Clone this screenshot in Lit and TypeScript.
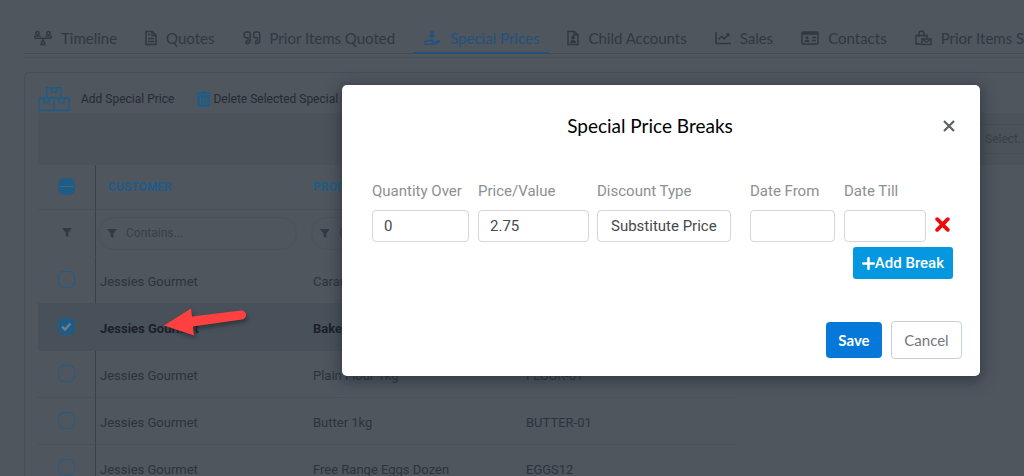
import { LitElement, html, css, svg, nothing } from "lit";
import { customElement, state } from "lit/decorators.js";

const icons = {
  timeline: svg`<svg width="18" height="16" viewBox="0 0 18 16" fill="none" stroke="currentColor" stroke-width="1.5"><circle cx="3.5" cy="3.2" r="1.7"/><circle cx="14.5" cy="3.2" r="1.7"/><path d="M.8 8V6.800c0-1.500 5.400-1.500 5.400 0M11.800 6.800c0-1.500 5.400-1.500 5.400 0V8M.8 8.200h16.400M9 8v3"/><path d="M7 14.400 8.200 11h1.600l1.200 3.400z"/></svg>`,
  quotes: svg`<svg width="12" height="16" viewBox="0 0 12 16" fill="none" stroke="currentColor" stroke-width="1.5"><path d="M1 1.500h6.500L11 5v9.500H1z"/><path d="M7 1.500V5.500h4M3 4.500h2M3 8.500h6M3 11.500h6"/></svg>`,
  prior: svg`<svg width="18" height="16" viewBox="0 0 18 16" fill="none" stroke="currentColor" stroke-width="1.5"><path d="M5 7.800H3.200A2 2 0 0 1 1.200 5.800V4a2 2 0 0 1 2-2h2a2 2 0 0 1 2 2v6.500a3 3 0 0 1-3 3H3.200v-2.200H4a1 1 0 0 0 1-1z"/><path d="M14.500 7.800h-1.800a2 2 0 0 1-2-2V4a2 2 0 0 1 2-2h2a2 2 0 0 1 2 2v6.500a3 3 0 0 1-3 3h-1v-2.200h.8a1 1 0 0 0 1-1z"/></svg>`,
  special: svg`<svg width="18" height="16" viewBox="0 0 18 16" fill="none" stroke="currentColor" stroke-width="1.5"><circle cx="9" cy="2.500" r="1.200"/><path d="M9 4v5.500M6.200 6.200l2.800-.7 2.800.7"/><path d="M1 14.300h11c2 0 3-1.500 4.500-3.300-1.200-1-2.500.5-4 1.200H8.500c2 0 2-1.800 0-1.800H4.500L3 11.600H1"/></svg>`,
  child: svg`<svg width="12" height="16" viewBox="0 0 12 16" fill="none" stroke="currentColor" stroke-width="1.5"><path d="M1 1.500h6.500L11 5v9.500H1z"/><path d="M7 1.500V5h4"/><circle cx="6" cy="7.600" r="1.200" fill="currentColor"/><path d="M3.500 12.500c0-3 5-3 5 0z" fill="currentColor" stroke-width="1"/></svg>`,
  sales: svg`<svg width="16" height="16" viewBox="0 0 16 16" fill="none" stroke="currentColor" stroke-width="1.6"><path d="M1 2v11.500h15"/><path d="m3.500 9.500 3.200-3.200 2.600 2.600 4.200-4.400"/><path d="M10.500 3.200h4v4z" fill="currentColor" stroke="none"/></svg>`,
  contacts: svg`<svg width="18" height="16" viewBox="0 0 18 16" fill="none" stroke="currentColor" stroke-width="1.5"><rect x="1" y="2" width="16" height="12" rx="1"/><path d="M1 3.500h16" stroke-width="2.5"/><circle cx="6" cy="7.700" r="1.500" fill="currentColor" stroke="none"/><path d="M3.500 12c0-3 5-3 5 0z" fill="currentColor" stroke="none"/><path d="M11 7.500h4M11 10.500h4"/></svg>`,
  sold: svg`<svg width="17" height="16" viewBox="0 0 17 16" fill="none" stroke="currentColor" stroke-width="1.4"><path d="M6 14H1V5.500h11V8M4 7V3.500a2.500 2.500 0 0 1 5 0V7"/><rect x="7" y="9" width="9" height="5.500"/><path d="M7 9l4.500 3.200L16 9"/></svg>`,
};

const boxes = svg`<svg width="32" height="26" viewBox="0 0 32 26" fill="none" stroke="currentColor" stroke-width="1.4"><path d="M8.700 12V1.700h14.600V12M1 12h30v12.500H1zM16 12v12.500"/><path d="M13.500 2v4h5V2M6 12v4.500h5V12M21 12v4.500h5V12"/></svg>`;
const trash = svg`<svg width="15" height="18" viewBox="0 0 16 18"><path fill="currentColor" fill-rule="evenodd" d="M0 2h4.500L6 .5h4L11.500 2H16v2H0zM1.500 5h13v11a1.500 1.500 0 0 1-1.500 1.500H3A1.500 1.500 0 0 1 1.500 16zM4.200 7v8.500h1.400V7zM7.300 7v8.500h1.400V7zM10.400 7v8.500h1.400V7z"/></svg>`;
const funnel = svg`<svg width="10" height="9" viewBox="0 0 10 9"><path fill="currentColor" d="M0 0h10L6.300 4.500V9L3.700 7.500v-3z"/></svg>`;

interface Row { customer: string; product: string; code: string; checked: boolean }

@customElement("app-root")
export class AppRoot extends LitElement {
  @state() private rows: Row[] = [
    { customer: "Jessies Gourmet", product: "Caramel Slice", code: "CARAMEL-01", checked: false },
    { customer: "Jessies Gourmet", product: "Baked Cheesecake", code: "CHEESE-01", checked: true },
    { customer: "Jessies Gourmet", product: "Plain Flour 1kg", code: "FLOUR-01", checked: false },
    { customer: "Jessies Gourmet", product: "Butter 1kg", code: "BUTTER-01", checked: false },
    { customer: "Jessies Gourmet", product: "Free Range Eggs Dozen", code: "EGGS12", checked: false },
  ];

  private tabs: [keyof typeof icons, string][] = [
    ["timeline", "Timeline"], ["quotes", "Quotes"], ["prior", "Prior Items Quoted"],
    ["special", "Special Prices"], ["child", "Child Accounts"], ["sales", "Sales"],
    ["contacts", "Contacts"], ["sold", "Prior Items Sold"],
  ];

  static styles = css`
    :host { display: block; height: 100vh; overflow: hidden; position: relative; background: #4f565e; color: #2d333b; font-family: Roboto, "Liberation Sans", sans-serif; font-size: 12px; }
    * { box-sizing: border-box; }
    svg { display: block; flex: none; }
    button, input, select { font: inherit; color: inherit; margin: 0; }
    .page { padding: 24px 0 0 24px; height: 100%; display: flex; flex-direction: column; overflow: hidden; }
    .tabs { display: flex; gap: 8px; flex: none; height: 30px; border-bottom: 1px solid #444b53; white-space: nowrap; font: 15px/28px Lato, sans-serif; }
    .tab { display: flex; align-items: center; gap: 9px; padding: 0 10px; height: 30px; color: #323840; text-decoration: none; border-bottom: 2px solid transparent; }
    .tab.active { color: #22527d; border-color: #22527d; }
    .rule { flex: none; height: 4px; border-bottom: 1px solid #495058; }
    .panel { flex: 1; margin-top: 14px; padding: 12px 0 0 13px; border: 1px solid #474e57; border-right: 0; border-bottom: 0; border-radius: 6px 0 0 0; }
    .tools { display: flex; align-items: center; height: 28px; gap: 22px; }
    .tool { display: flex; align-items: center; padding: 0; border: 0; background: none; white-space: nowrap; color: #262b33; }
    .add { gap: 11px; }
    .del { gap: 2px; }
    .blue { color: #1d5c87; }
    .band { display: flex; justify-content: flex-end; align-items: center; height: 52px; background: #4b5259; }
    .pick { display: flex; width: 54px; height: 30px; align-items: center; padding-left: 15px; color: #3a4048; border-top: 1px solid #474d55; border-bottom: 1px solid #474d55; }
    table { width: 699px; border-collapse: separate; border-spacing: 0; table-layout: fixed; text-align: left; font-size: 13px; }
    .c0 { width: 58px; }
    .c1 { width: 213px; }
    th, td { padding: 0 4px; height: 47px; border-bottom: 1px solid #495058; font-weight: 400; white-space: nowrap; }
    td { padding-top: 2px; }
    th:first-child, td:first-child { border-right: 1px solid #3a4149; padding: 0 0 1px; }
    .head th { height: 45px; color: #1f5c87; font-size: 12px; font-weight: 700; }
    .head th:nth-child(2) { padding-left: 12px; }
    .filters th { border-bottom-color: transparent; }
    .mid { display: flex; justify-content: center; }
    .filters { color: #333942; }
    .pill { display: flex; align-items: center; gap: 9px; height: 33px; margin: 0 8px 0 -2px; padding-left: 8px; border: 1px solid #4b5259; border-radius: 16px; }
    .pill input { width: 120px; padding: 0; border: 0; outline: 0; background: none; font-size: 12px; }
    .pill input::placeholder { color: #3a4048; opacity: 1; }
    .selected td { background: #48515a; font-weight: 700; color: #1b2028; }
    .selected td:first-child { border-right-color: #48515a; }
    .box { appearance: none; width: 17px; height: 17px; border: 1px solid #1f5c87; border-radius: 6px; }
    .box:checked { background: #1d5c87 url("data:image/svg+xml,%3Csvg xmlns='http://www.w3.org/2000/svg' viewBox='0 0 17 17'%3E%3Cpath d='M4 8.5l3 3 5.500-6' fill='none' stroke='%23727d86' stroke-width='2.400'/%3E%3C/svg%3E") center / 17px; }
    .box:indeterminate { background: #1d5c87 linear-gradient(#4c6577, #4c6577) center / 13px 1px no-repeat; }
    .arrow { position: absolute; left: 160px; top: 304px; filter: drop-shadow(2px 3px 2px #20252c99); }
    .dialog { position: absolute; left: 342px; top: 85px; width: calc(100% - 386px); padding: 29px 18px 17px 30px; border-radius: 5px; background: #fff; box-shadow: 0 3px 14px 2px #23283499; color: #4c4f54; font-size: 15px; }
    .title { display: flex; align-items: center; gap: 15px; margin-right: 7px; }
    h2 { flex: 1; margin: 0; font: 400 19px/24px Lato, sans-serif; color: #000; text-align: center; }
    .close { padding: 0; border: 0; background: none; color: #5b6168; }
    .fields { display: flex; align-items: flex-end; margin-top: 43px; }
    .field { display: flex; flex-direction: column; gap: 8px; color: #8d8f92; line-height: 21px; white-space: nowrap; }
    .field input, .field select { appearance: none; width: 100%; height: 32px; padding: 0 11px; border: 1px solid #d3d5d8; border-radius: 4px; background: #fff; color: #45484d; outline: 0; }
    .field select { padding: 0 13px; }
    .qty { width: 97px; margin-right: 9px; }
    .price { width: 111px; margin-right: 8px; }
    .type { width: 134px; margin-right: 19px; }
    .from { width: 85px; margin-right: 9px; }
    .till { width: 82px; margin-right: 9px; }
    .remove { padding: 0 0 10px; border: 0; background: none; color: #f00b0b; }
    .break { display: flex; align-items: center; height: 32px; margin: 5px 9px 0 auto; padding: 0 9px; border: 0; border-radius: 3px; background: #0598e0; color: #fff; font-weight: 500; }
    .actions { display: flex; align-items: center; justify-content: flex-end; gap: 9px; margin-top: 42px; font: 15px/20px Lato, sans-serif; }
    .save { height: 36px; width: 56px; padding: 0; border: 0; border-radius: 4px; background: #0578d9; color: #fff; font-weight: 700; }
    .cancel { height: 38px; width: 71px; padding: 0; border: 1px solid #c6ced6; border-radius: 4px; background: #fff; color: #75787c; }
  `;

  private toggle(i: number) {
    this.rows = this.rows.map((r, n) => (n === i ? { ...r, checked: !r.checked } : r));
  }

  render() {
    return html`
      <div class="page">
        <nav class="tabs">
          ${this.tabs.map(([icon, label]) => html`<a href="#" class="tab ${icon === "special" ? "active" : ""}" aria-current=${icon === "special" ? "page" : nothing}>${icons[icon]}<span>${label}</span></a>`)}
        </nav>
        <div class="rule"></div>
        <main class="panel">
          <div class="tools">
            <button class="tool add"><span class="blue">${boxes}</span>Add Special Price</button>
            <button class="tool del"><span class="blue">${trash}</span>Delete Selected Special Prices</button>
          </div>
          <div class="band"><span class="pick">Select...</span></div>
          <table>
            <colgroup><col class="c0" /><col class="c1" /><col class="c1" /><col /></colgroup>
            <thead>
              <tr class="head">
                <th><div class="mid"><input class="box" type="checkbox" aria-label="Select all" .indeterminate=${true} /></div></th>
                <th>CUSTOMER</th><th>PRODUCT</th><th>CODE</th>
              </tr>
              <tr class="filters">
                <th><div class="mid">${funnel}</div></th>
                ${["customer", "product", "code"].map((c) => html`<th><label class="pill">${funnel}<input aria-label="Filter ${c}" placeholder="Contains..." /></label></th>`)}
              </tr>
            </thead>
            <tbody>
              ${this.rows.map((r, i) => html`<tr class=${r.checked ? "selected" : ""}>
                <td><div class="mid"><input class="box" type="checkbox" aria-label="Select ${r.product}" .checked=${r.checked} @change=${() => this.toggle(i)} /></div></td>
                <td>${r.customer}</td><td>${r.product}</td><td>${r.code}</td>
              </tr>`)}
            </tbody>
          </table>
        </main>
      </div>
      <svg class="arrow" width="90" height="36" viewBox="0 0 90 36"><path fill="#ff4040" d="M4 21.500 31 4.500 32 12.500 81 6.500a4.500 4.500 0 0 1 1 9L33 22.500 34 31.500z"/></svg>
      <section class="dialog" role="dialog" aria-labelledby="title">
        <header class="title">
          <h2 id="title">Special Price Breaks</h2>
          <button class="close" aria-label="Close"><svg width="12" height="12" viewBox="0 0 12 12"><path d="m1 1 10 10M11 1 1 11" stroke="currentColor" stroke-width="2.200"/></svg></button>
        </header>
        <div class="fields">
          <label class="field qty">Quantity Over<input value="0" /></label>
          <label class="field price">Price/Value<input value="2.75" /></label>
          <label class="field type">Discount Type<select><option>Substitute Price</option></select></label>
          <label class="field from">Date From<input /></label>
          <label class="field till">Date Till<input /></label>
          <button class="remove" aria-label="Remove break"><svg width="15" height="15" viewBox="0 0 15 15"><path d="m2.200 2.200 10.600 10.600M12.800 2.200 2.200 12.800" stroke="currentColor" stroke-width="3.800" stroke-linecap="round"/></svg></button>
        </div>
        <button class="break"><svg width="13" height="13" viewBox="0 0 13 13"><path d="M6.500 1.200v10.600M1.200 6.500h10.600" stroke="currentColor" stroke-width="2.600" stroke-linecap="round"/></svg>Add Break</button>
        <footer class="actions"><button class="save">Save</button><button class="cancel">Cancel</button></footer>
      </section>
    `;
  }
}
